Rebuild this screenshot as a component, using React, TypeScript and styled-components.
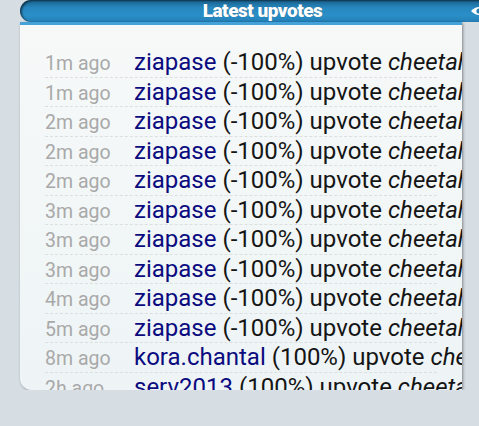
import styled, { createGlobalStyle } from "styled-components";

const GlobalStyle = createGlobalStyle`
    html, body {
        margin: 0;
        padding: 0;
        background: #d6dde3;
        overflow: hidden;
    }
    body {
        font-family: Roboto, "Liberation Sans", sans-serif;
    }
`;

const Page = styled.div`
    padding-left: 20px;
    width: 600px;
`;

const Header = styled.div`
    width: 485px;
    height: 22px;
    box-sizing: border-box;
    border-radius: 11px 0 0 11px;
    background: linear-gradient(to bottom, #195f8c 0%, #2787bf 35%, #2b8fc7 70%, #237fb6 100%);
    box-shadow: inset 2px 1px 2px rgba(0, 0, 0, 0.5);
    display: grid;
    grid-template-columns: 1fr auto 1fr;
    align-items: center;
`;

const Title = styled.div`
    grid-column: 2;
    color: #fff;
    font-weight: 900;
    font-size: 19px;
    line-height: 22px;
    letter-spacing: -0.5px;
    text-shadow: 0 0 1px rgba(0, 0, 0, 0.3);
`;

const EyeSlot = styled.div`
    grid-column: 3;
    justify-self: end;
    padding-right: 17px;
    display: flex;
    align-items: center;
`;

const Panel = styled.div`
    width: 442px;
    height: 368px;
    box-sizing: border-box;
    border-top: 3px solid #45a2d9;
    background: linear-gradient(to bottom, #f6f9f8, #eef4f6);
    border-radius: 0 0 0 12px;
    box-shadow: 1px 1px 3px rgba(0, 0, 0, 0.4);
    overflow: hidden;
    padding: 23px 0 0 25px;
`;

const List = styled.div`
    width: 392px;
    display: flex;
    flex-direction: column;
`;

const Row = styled.div`
    height: 29.5px;
    box-sizing: border-box;
    border-bottom: 1px dashed #dcdfe0;
    display: flex;
    align-items: baseline;
    white-space: nowrap;
    line-height: 28.5px;
    font-size: 24px;
    color: #151515;
`;

const Time = styled.span`
    flex: 0 0 89px;
    font-size: 19.5px;
    color: #a9a9a9;
`;

const Voter = styled.span`
    color: #0b0b80;
`;

const Post = styled.em`
    font-style: italic;
`;

const Eye = () => (
    <svg width="18" height="12" viewBox="0 0 18 12">
        <path d="M1 6 Q9 -2 17 6 Q9 14 1 6 Z" fill="#fff" />
        <circle cx="9" cy="6" r="2.6" fill="#2a7fb4" />
    </svg>
);

const votes = [
    { time: "1m ago", voter: "ziapase", pct: "-100%" },
    { time: "1m ago", voter: "ziapase", pct: "-100%" },
    { time: "2m ago", voter: "ziapase", pct: "-100%" },
    { time: "2m ago", voter: "ziapase", pct: "-100%" },
    { time: "2m ago", voter: "ziapase", pct: "-100%" },
    { time: "3m ago", voter: "ziapase", pct: "-100%" },
    { time: "3m ago", voter: "ziapase", pct: "-100%" },
    { time: "3m ago", voter: "ziapase", pct: "-100%" },
    { time: "4m ago", voter: "ziapase", pct: "-100%" },
    { time: "5m ago", voter: "ziapase", pct: "-100%" },
    { time: "8m ago", voter: "kora.chantal", pct: "100%" },
    { time: "2h ago", voter: "serv2013", pct: "100%" },
];

export default function App() {
    return (
        <Page>
            <GlobalStyle />
            <Header>
                <Title>Latest upvotes</Title>
                <EyeSlot>
                    <Eye />
                </EyeSlot>
            </Header>
            <Panel>
                <List>
                    {votes.map((v, i) => (
                        <Row key={i}>
                            <Time>{v.time}</Time>
                            <span>
                                <Voter>{v.voter}</Voter> ({v.pct}) upvote <Post>cheetah</Post>
                            </span>
                        </Row>
                    ))}
                </List>
            </Panel>
        </Page>
    );
}
